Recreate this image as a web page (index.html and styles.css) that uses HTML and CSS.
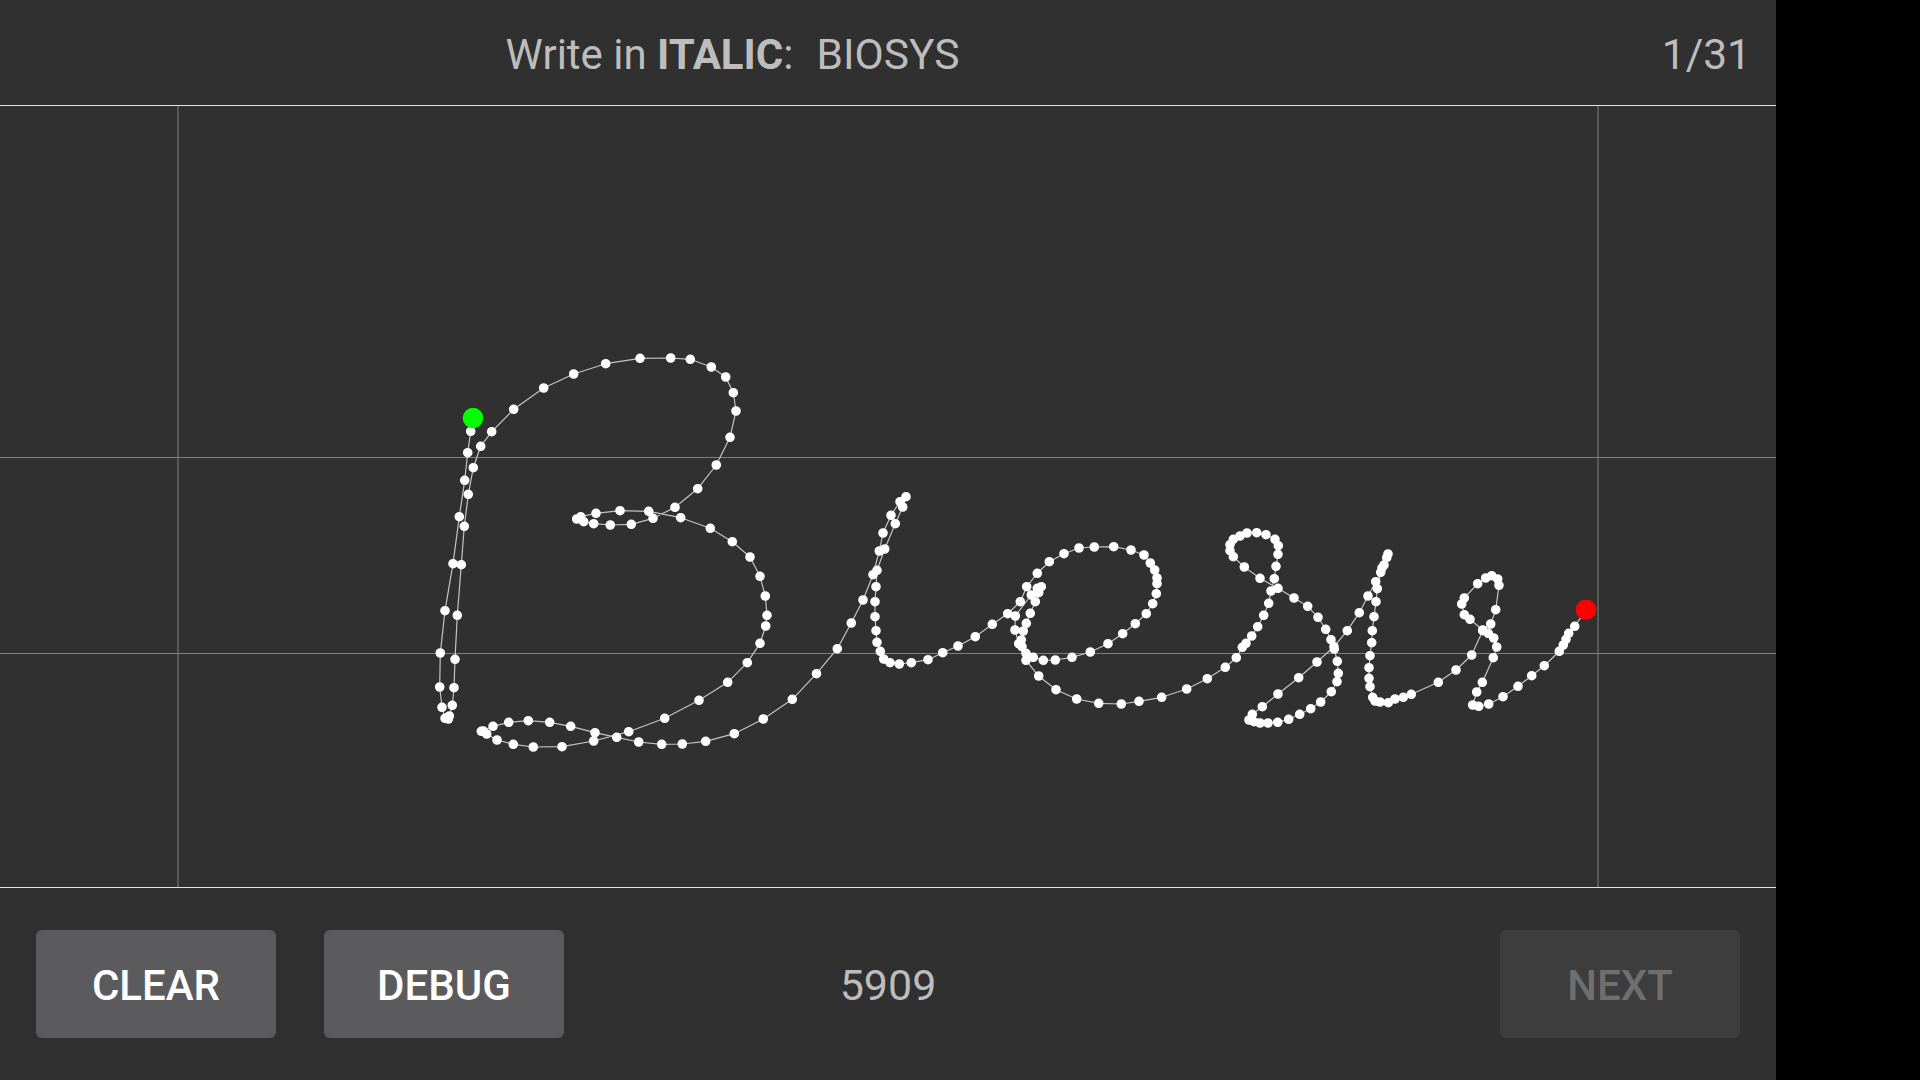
FILE: index.html
```html
<!DOCTYPE html>
<html lang="en">
<head>
<meta charset="utf-8">
<title>Write in italic</title>
<link rel="stylesheet" href="styles.css">
</head>
<body>
<main class="app">
  <header class="topbar">
    <div class="prompt">Write in&nbsp;<b class="strong">ITALIC</b>:</div>
    <div class="word">BIOSYS</div>
    <div class="counter">1/31</div>
  </header>
  <section class="canvas">
    <svg class="sketch" viewBox="0 106 1776 781" width="1776" height="781" role="img" aria-label="Handwriting trace">
      <path class="guide" d="M178 106V887M1598 106V887M0 457.5H1776M0 653.5H1776"/>
      <polyline class="stroke" id="trace" points="473 418 470.7 431.3 467.7 452.7 464.7 480.3 459.3 516.7 453 563.7 445 610.7 440.3 653 439.7 687 442 707.3 445 718.3 448.3 719 449.3 716 452.3 705.3 454 687.7 455 659.3 457.3 615.3 461.3 564.7 464.3 526.3 468.3 494.3 473.3 467.7 480.7 446.3 491.7 431.7 513.7 409.3 543.7 388 573.7 374 605.7 363.7 640 358.3 670.7 358 690.3 359.3 711.3 367 725.7 377 733.3 392.7 736 411 730 437.3 716.3 465 697.7 488.7 675 507.3 653 518.3 631.3 524.3 610.3 525 593.7 523.7 583.7 521.7 576.7 519 580.7 516.7 596 513.3 620 510.7 648.7 511.3 680.7 517.7 710.3 528.3 732.3 541.7 750 557 760 576.3 765.3 596 767 615.3 765.7 626 760 643.3 747.3 662.7 727.7 682.3 699 700.3 664.7 718.3 628.7 731.7 593.7 741 562 746.7 533.3 747 513.3 744.3 497 740 486.7 734 481.3 731.3 483.3 731 493 726.3 508.7 722.3 528.3 720.7 549.7 722.3 570.7 726.3 595 732.7 616.7 737.3 638.7 742 661.7 744.3 682.3 744 705.7 741.3 734.3 733.7 763.3 719 792.3 699.3 816.5 673.7 837.3 648.7 851.3 623 863 600 873 574.7 879.3 551 883 533 891 515.3 900 501.7 906 496.7 902.7 507 895.3 523.7 884.7 549 877 570.3 876 586.7 875 601.7 875 616.7 876 630.7 877 642.3 880.3 651.3 883.7 659 890 662.7 899.3 664 911.3 662.7 928 659.7 942.7 652.7 958 646 975.3 636.7 992.3 624.3 1007.7 613.7 1020.3 601.7 1026.7 586.7 1037.3 573.3 1049.3 561.7 1064 553.7 1079 548 1094.3 547 1113.7 546.7 1131 550 1144 555 1150.3 563 1154.7 570 1157 578 1157 583.7 1156.3 593.7 1152.7 603.7 1146.3 613.7 1135.3 623.7 1122.7 633.7 1108 643.7 1090.3 652 1072 657.3 1055.3 660 1043.3 660.3 1033.3 657.3 1026 653.3 1022 646.7 1021.3 640 1023.3 631 1026.3 623.3 1030.3 613.3 1035.3 601.7 1038.7 592.7 1041.3 586.7 1037.3 588.3 1031.3 595 1015.3 616 1015 630 1018.7 643.7 1026 660.3 1038.7 676 1056 689.7 1076.7 699 1098.7 703.3 1121.3 704 1139 701.3 1161.7 697.3 1186.7 689 1207.3 678.7 1225.3 667.3 1236.3 657.7 1242.3 647.3 1246 643.3 1251.7 636 1257.7 626.7 1263.7 615.3 1268.7 603.3 1271 591 1274.3 578.7 1276 566.3 1278 554.3 1278.3 545.7 1275 539.3 1266 534.7 1256.7 532.7 1247 533 1240 536 1233.3 539.3 1230 544.7 1230 550.7 1233.3 556.7 1244.3 567 1260 578.3 1278 588.3 1294 598 1307.7 606.3 1318 617.3 1325.7 629.3 1331 639.7 1334.3 649 1337.3 661.3 1338.3 673.3 1337 681.7 1331.3 691.7 1320.7 702 1310.7 708.7 1299.7 714.3 1288.7 719.3 1277.7 722.3 1268 723 1260 723 1254 721.7 1249 720 1252.3 714.3 1262.3 706.7 1278 694 1298.7 677.7 1317 662 1334 646.7 1347.3 630.7 1359.3 612.7 1368 596 1375.7 581.7 1380.7 572.3 1384 565 1388 554 1386.7 557.7 1382 568 1377.3 588.7 1376 601.7 1374 616.7 1372.3 630.7 1371.7 642.7 1370 655.7 1369 667.7 1369 678.3 1370 686.7 1372.7 697.3 1375 701 1380 702 1388.3 702.7 1395 699 1403.3 697.3 1411.3 694.3 1438.3 682.3 1456 670 1471.7 655 1482.7 630.7 1490.7 624 1495.7 609.7 1499 585.3 1497.7 579 1491.7 575.7 1485.7 578 1477.7 583.7 1464.3 598 1461.7 604 1464.3 614.7 1470 619.3 1482.7 630 1488.3 633.3 1493.7 638 1496.7 647 1493.3 657.7 1482.3 682.3 1476.7 692 1472.7 705 1478.7 706.3 1488.7 704 1503 696.7 1518 686.3 1531.7 675.7 1544.3 665.7 1559.3 651.3 1563.3 645 1566 639.3 1568.7 633.3 1574.7 626.3 1586 609.7"/>
      <path class="dots" d="M470.7 431.3h0M467.7 452.7h0M464.7 480.3h0M459.3 516.7h0M453 563.7h0M445 610.7h0M440.3 653h0M439.7 687h0M442 707.3h0M445 718.3h0M448.3 719h0M449.3 716h0M452.3 705.3h0M454 687.7h0M455 659.3h0M457.3 615.3h0M461.3 564.7h0M464.3 526.3h0M468.3 494.3h0M473.3 467.7h0M480.7 446.3h0M491.7 431.7h0M513.7 409.3h0M543.7 388h0M573.7 374h0M605.7 363.7h0M640 358.3h0M670.7 358h0M690.3 359.3h0M711.3 367h0M725.7 377h0M733.3 392.7h0M736 411h0M730 437.3h0M716.3 465h0M697.7 488.7h0M675 507.3h0M653 518.3h0M631.3 524.3h0M610.3 525h0M593.7 523.7h0M583.7 521.7h0M576.7 519h0M580.7 516.7h0M596 513.3h0M620 510.7h0M648.7 511.3h0M680.7 517.7h0M710.3 528.3h0M732.3 541.7h0M750 557h0M760 576.3h0M765.3 596h0M767 615.3h0M765.7 626h0M760 643.3h0M747.3 662.7h0M727.7 682.3h0M699 700.3h0M664.7 718.3h0M628.7 731.7h0M593.7 741h0M562 746.7h0M533.3 747h0M513.3 744.3h0M497 740h0M486.7 734h0M481.3 731.3h0M483.3 731h0M493 726.3h0M508.7 722.3h0M528.3 720.7h0M549.7 722.3h0M570.7 726.3h0M595 732.7h0M616.7 737.3h0M638.7 742h0M661.7 744.3h0M682.3 744h0M705.7 741.3h0M734.3 733.7h0M763.3 719h0M792.3 699.3h0M816.5 673.7h0M837.3 648.7h0M851.3 623h0M863 600h0M873 574.7h0M879.3 551h0M883 533h0M891 515.3h0M900 501.7h0M906 496.7h0M902.7 507h0M895.3 523.7h0M884.7 549h0M877 570.3h0M876 586.7h0M875 601.7h0M875 616.7h0M876 630.7h0M877 642.3h0M880.3 651.3h0M883.7 659h0M890 662.7h0M899.3 664h0M911.3 662.7h0M928 659.7h0M942.7 652.7h0M958 646h0M975.3 636.7h0M992.3 624.3h0M1007.7 613.7h0M1020.3 601.7h0M1026.7 586.7h0M1037.3 573.3h0M1049.3 561.7h0M1064 553.7h0M1079 548h0M1094.3 547h0M1113.7 546.7h0M1131 550h0M1144 555h0M1150.3 563h0M1154.7 570h0M1157 578h0M1157 583.7h0M1156.3 593.7h0M1152.7 603.7h0M1146.3 613.7h0M1135.3 623.7h0M1122.7 633.7h0M1108 643.7h0M1090.3 652h0M1072 657.3h0M1055.3 660h0M1043.3 660.3h0M1033.3 657.3h0M1026 653.3h0M1022 646.7h0M1021.3 640h0M1023.3 631h0M1026.3 623.3h0M1030.3 613.3h0M1035.3 601.7h0M1038.7 592.7h0M1041.3 586.7h0M1037.3 588.3h0M1031.3 595h0M1015.3 616h0M1015 630h0M1018.7 643.7h0M1026 660.3h0M1038.7 676h0M1056 689.7h0M1076.7 699h0M1098.7 703.3h0M1121.3 704h0M1139 701.3h0M1161.7 697.3h0M1186.7 689h0M1207.3 678.7h0M1225.3 667.3h0M1236.3 657.7h0M1242.3 647.3h0M1246 643.3h0M1251.7 636h0M1257.7 626.7h0M1263.7 615.3h0M1268.7 603.3h0M1271 591h0M1274.3 578.7h0M1276 566.3h0M1278 554.3h0M1278.3 545.7h0M1275 539.3h0M1266 534.7h0M1256.7 532.7h0M1247 533h0M1240 536h0M1233.3 539.3h0M1230 544.7h0M1230 550.7h0M1233.3 556.7h0M1244.3 567h0M1260 578.3h0M1278 588.3h0M1294 598h0M1307.7 606.3h0M1318 617.3h0M1325.7 629.3h0M1331 639.7h0M1334.3 649h0M1337.3 661.3h0M1338.3 673.3h0M1337 681.7h0M1331.3 691.7h0M1320.7 702h0M1310.7 708.7h0M1299.7 714.3h0M1288.7 719.3h0M1277.7 722.3h0M1268 723h0M1260 723h0M1254 721.7h0M1249 720h0M1252.3 714.3h0M1262.3 706.7h0M1278 694h0M1298.7 677.7h0M1317 662h0M1334 646.7h0M1347.3 630.7h0M1359.3 612.7h0M1368 596h0M1375.7 581.7h0M1380.7 572.3h0M1384 565h0M1388 554h0M1386.7 557.7h0M1382 568h0M1377.3 588.7h0M1376 601.7h0M1374 616.7h0M1372.3 630.7h0M1371.7 642.7h0M1370 655.7h0M1369 667.7h0M1369 678.3h0M1370 686.7h0M1372.7 697.3h0M1375 701h0M1380 702h0M1388.3 702.7h0M1395 699h0M1403.3 697.3h0M1411.3 694.3h0M1438.3 682.3h0M1456 670h0M1471.7 655h0M1482.7 630.7h0M1490.7 624h0M1495.7 609.7h0M1499 585.3h0M1497.7 579h0M1491.7 575.7h0M1485.7 578h0M1477.7 583.7h0M1464.3 598h0M1461.7 604h0M1464.3 614.7h0M1470 619.3h0M1482.7 630h0M1488.3 633.3h0M1493.7 638h0M1496.7 647h0M1493.3 657.7h0M1482.3 682.3h0M1476.7 692h0M1472.7 705h0M1478.7 706.3h0M1488.7 704h0M1503 696.7h0M1518 686.3h0M1531.7 675.7h0M1544.3 665.7h0M1559.3 651.3h0M1563.3 645h0M1566 639.3h0M1568.7 633.3h0M1574.7 626.3h0"/>
      <circle class="start" cx="473" cy="418" r="10.3"/>
      <circle class="end" cx="1586" cy="609.7" r="10.3"/>
    </svg>
  </section>
  <footer class="bottombar">
    <div class="actions">
      <button class="btn" type="button">CLEAR</button>
      <button class="btn" type="button">DEBUG</button>
    </div>
    <div class="score">5909</div>
    <div class="actions actions-end">
      <button class="btn btn-disabled" type="button" disabled>NEXT</button>
    </div>
  </footer>
</main>
</body>
</html>
```
FILE: styles.css
```css
html, body {
  margin: 0;
  height: 100%;
  background: #000;
}

.app {
  width: 1776px;
  height: 1080px;
  display: flex;
  flex-direction: column;
  background: #303030;
  color: #bdbdbd;
  font-family: Roboto, "Liberation Sans", sans-serif;
  font-size: 42px;
  overflow: hidden;
}

.topbar {
  box-sizing: border-box;
  height: 106px;
  flex: none;
  display: grid;
  grid-template-columns: 1fr auto 1fr;
  align-items: center;
  padding-top: 3px;
  border-bottom: 1px solid #e4e4e4;
}

.prompt {
  justify-self: end;
  margin-right: 23px;
}

.word {
  font-size: 42.5px;
}

.strong {
  font-weight: 700;
}

.counter {
  justify-self: end;
  margin-right: 25px;
  font-size: 42.5px;
}

.canvas {
  flex: none;
  height: 781px;
}

.sketch {
  display: block;
}

.guide {
  fill: none;
  stroke: #808080;
  stroke-width: 1;
}

.stroke {
  fill: none;
  stroke: #c4c4c4;
  stroke-width: 1.2;
  stroke-linejoin: round;
}

.dots {
  fill: none;
  stroke: #fff;
  stroke-width: 9.6;
  stroke-linecap: round;
}

.start {
  fill: #00ff00;
}

.end {
  fill: #ff0000;
}

.bottombar {
  box-sizing: border-box;
  flex: 1;
  border-top: 1px solid #e4e4e4;
  display: grid;
  grid-template-columns: 1fr auto 1fr;
  align-items: center;
  padding: 0 36px;
}

.actions {
  display: flex;
  gap: 48px;
}

.actions-end {
  justify-content: flex-end;
}

.score {
  font-size: 43px;
  padding-top: 2px;
}

.btn {
  width: 240px;
  height: 108px;
  padding: 2px 0 0;
  border: 0;
  border-radius: 6px;
  background: #5b5b5d;
  color: #fff;
  font: 500 42px Roboto, "Liberation Sans", sans-serif;
}

.btn-disabled {
  background: #3d3d3d;
  color: #6f6f6f;
}
```
